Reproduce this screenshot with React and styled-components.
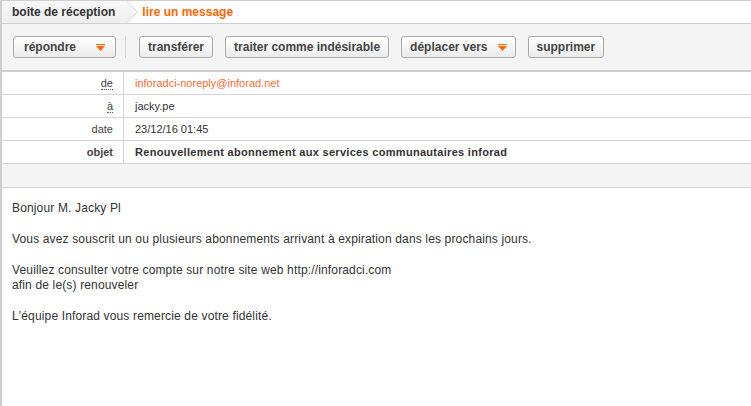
import React from "react";
import styled, { createGlobalStyle } from "styled-components";

const GlobalStyle = createGlobalStyle`
  html, body {
    margin: 0;
    padding: 0;
    background: #fff;
  }
  body {
    font-family: "Liberation Sans", Arial, Helvetica, sans-serif;
    color: #333;
  }
  * {
    box-sizing: border-box;
  }
`;

const orange = "#ff6600";

const Page = styled.div`
  min-height: 406px;
  border-left: 2px solid #cfcfcf;
  background: #fff;
`;

const Breadcrumb = styled.div`
  display: flex;
  align-items: stretch;
  height: 24px;
  border-top: 1px solid #cfcfcf;
  border-bottom: 1px solid #cfcfcf;
  background: #fff;
  overflow: hidden;
`;

const Crumb = styled.div`
  position: relative;
  display: flex;
  align-items: center;
  padding: ${props => (props.current ? "0 0 0 15px" : "0 12px 0 10px")};
  font-size: 12px;
  font-weight: bold;
  color: ${props => (props.current ? orange : "#333")};
  background: ${props => (props.current ? "transparent" : "linear-gradient(#f7f7f7, #eeeeee)")};

  ${props =>
    !props.current &&
    `
    &::after {
      content: "";
      position: absolute;
      right: -8px;
      top: 3px;
      width: 15px;
      height: 15px;
      transform: rotate(45deg);
      background: linear-gradient(135deg, #f7f7f7, #eeeeee);
      border-top: 1px solid #e2e2e2;
      border-right: 1px solid #dcdcdc;
      z-index: 1;
    }
  `}
`;

const Toolbar = styled.div`
  display: flex;
  align-items: center;
  gap: 12px;
  height: 48px;
  padding: 0 11px;
  background: #f4f4f4;
  border-bottom: 2px solid #cfcfcf;
`;

const Button = styled.button`
  display: flex;
  align-items: center;
  height: 22px;
  padding: ${props => (props.wide ? "0 10px" : "0 8px")};
  border: 1px solid #a9a9a9;
  border-radius: 3px;
  background: linear-gradient(#ffffff, #ebebeb);
  box-shadow: inset 0 1px 0 #fff;
  font-family: "Liberation Sans", Arial, sans-serif;
  font-size: 12px;
  font-weight: bold;
  color: #444;
  cursor: pointer;
`;

const Arrow = styled.svg`
  display: block;
  margin-left: ${props => props.gap}px;
`;

const Separator = styled.div`
  width: 1px;
  height: 22px;
  margin: 0 1px 0 -3px;
  background: #d4d4d4;
`;

const Headers = styled.div`
  display: grid;
  grid-template-columns: 122px 1fr;
`;

const Label = styled.div`
  height: 23px;
  display: flex;
  align-items: center;
  justify-content: flex-end;
  padding-right: 10px;
  border-right: 1px solid #d4d4d4;
  border-bottom: 1px solid #d4d4d4;
  font-size: 11px;
  font-weight: ${props => (props.strong ? "bold" : "normal")};
  color: #444;
`;

const Abbr = styled.span`
  border-bottom: 1px dotted #555;
  line-height: 12px;
`;

const Value = styled.div`
  height: 23px;
  display: flex;
  align-items: center;
  padding-left: 11px;
  border-bottom: 1px solid #d4d4d4;
  font-size: 11px;
  font-weight: ${props => (props.strong ? "bold" : "normal")};
  letter-spacing: ${props => (props.strong ? "0.3px" : "0")};
  color: ${props => (props.accent ? "#ff6a33" : "#333")};
`;

const Spacer = styled.div`
  height: 24px;
  background: #f4f4f4;
  border-bottom: 1px solid #d4d4d4;
`;

const Body = styled.div`
  padding: 13px 10px;
  font-size: 12px;
  line-height: 15px;
  letter-spacing: 0.15px;
  color: #333;
`;

const Para = styled.p`
  margin: 0 0 16px;
`;

const DropArrow = ({ gap }) => (
  <Arrow gap={gap} width="9" height="7" viewBox="0 0 9 7">
    <rect x="0" y="0" width="9" height="1" fill={orange} />
    <polygon points="0,2 9,2 4.5,7" fill={orange} />
  </Arrow>
);

const headers = [
  { label: <Abbr>de</Abbr>, value: "inforadci-noreply@inforad.net", accent: true },
  { label: <Abbr>à</Abbr>, value: "jacky.pe" },
  { label: "date", value: "23/12/16 01:45" },
  { label: "objet", value: "Renouvellement abonnement aux services communautaires inforad", strong: true }
];

export default function App() {
  return (
    <>
      <GlobalStyle />
      <Page>
        <Breadcrumb>
          <Crumb>boîte de réception</Crumb>
          <Crumb current>lire un message</Crumb>
        </Breadcrumb>

        <Toolbar>
          <Button wide>
            répondre
            <DropArrow gap={20} />
          </Button>
          <Separator />
          <Button>transférer</Button>
          <Button>traiter comme indésirable</Button>
          <Button>
            déplacer vers
            <DropArrow gap={10} />
          </Button>
          <Button>supprimer</Button>
        </Toolbar>

        <Headers>
          {headers.map((h, i) => (
            <React.Fragment key={i}>
              <Label strong={h.strong}>{h.label}</Label>
              <Value accent={h.accent} strong={h.strong}>
                {h.value}
              </Value>
            </React.Fragment>
          ))}
        </Headers>
        <Spacer />

        <Body>
          <Para>Bonjour M. Jacky Pl</Para>
          <Para>Vous avez souscrit un ou plusieurs abonnements arrivant à expiration dans les prochains jours.</Para>
          <Para>
            Veuillez consulter votre compte sur notre site web http://inforadci.com
            <br />
            afin de le(s) renouveler
          </Para>
          <Para>L'équipe Inforad vous remercie de votre fidélité.</Para>
        </Body>
      </Page>
    </>
  );
}
